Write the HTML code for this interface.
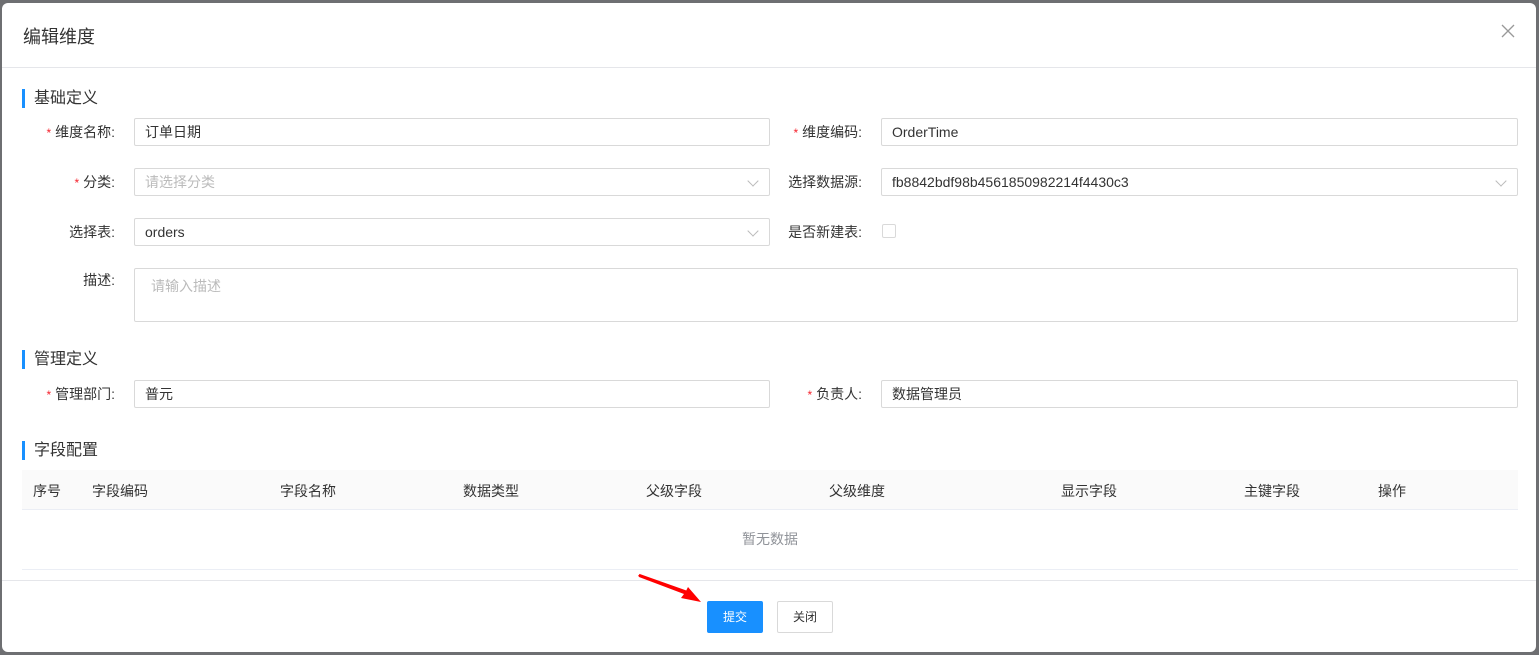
<!DOCTYPE html>
<html><head><meta charset="utf-8"><style>
*{box-sizing:border-box;margin:0;padding:0}
body{width:1539px;height:655px;background:#6e6f72;font-family:"Liberation Sans","Noto Sans CJK SC",sans-serif;position:relative;overflow:hidden;color:#333;font-size:14px}
.dlg{position:absolute;left:2px;top:3px;width:1534px;height:649px;background:#fff;border-radius:6px}
.a{position:absolute}
.title{left:21px;top:20px;font-size:18px;color:#333}
.hl{left:0;width:1534px;height:1px;background:#e5e6ea}
.sec{font-size:16px;color:#333;padding-left:9px;border-left:3px solid #1890ff;line-height:19px;left:20px}
.lbl{text-align:right;font-size:14px;color:#333;line-height:28px}
.lbl b{color:#f5222d;font-weight:normal;margin-right:4px;font-size:12px}
.in{border:1px solid #d9d9d9;border-radius:2px;height:28px;line-height:26px;padding-left:10px;font-size:14px;color:#333;background:#fff}
.ph{color:#bbb}
.arr{position:absolute;right:12px;top:8px;width:8px;height:8px;border-right:1px solid #bbb;border-bottom:1px solid #bbb;transform:rotate(45deg)}
.th{top:467px;left:20px;width:1496px;height:40px;background:#fafafa;border-bottom:1px solid #ebeef5}
.th span{position:absolute;top:11px;font-size:14px;color:#333}
.btn{height:32px;line-height:30px;text-align:center;font-size:12px;border-radius:2px}
</style></head><body>
<div class="dlg">
<div class="a title">编辑维度</div>
<div class="a" style="left:1498px;top:20px;width:16px;height:16px">
<svg width="16" height="16"><path d="M2 2L14 14M14 2L2 14" stroke="#999" stroke-width="1.3"/></svg></div>
<div class="a hl" style="top:64px"></div>

<div class="a sec" style="top:86px">基础定义</div>
<div class="a lbl" style="left:0;width:113px;top:115px"><b>*</b>维度名称:</div>
<div class="a in" style="left:132px;top:115px;width:636px">订单日期</div>
<div class="a lbl" style="left:760px;width:100px;top:115px"><b>*</b>维度编码:</div>
<div class="a in" style="left:879px;top:115px;width:637px">OrderTime</div>

<div class="a lbl" style="left:0;width:113px;top:165px"><b>*</b>分类:</div>
<div class="a in ph" style="left:132px;top:165px;width:636px">请选择分类<i class="arr"></i></div>
<div class="a lbl" style="left:760px;width:100px;top:165px">选择数据源:</div>
<div class="a in" style="left:879px;top:165px;width:637px">fb8842bdf98b4561850982214f4430c3<i class="arr"></i></div>

<div class="a lbl" style="left:0;width:113px;top:215px">选择表:</div>
<div class="a in" style="left:132px;top:215px;width:636px">orders<i class="arr"></i></div>
<div class="a lbl" style="left:760px;width:100px;top:215px">是否新建表:</div>
<div class="a" style="left:880px;top:221px;width:14px;height:14px;border:1px solid #d9d9d9;border-radius:2px"></div>

<div class="a lbl" style="left:0;width:113px;top:267px;line-height:20px">描述:</div>
<div class="a in ph" style="left:132px;top:265px;width:1384px;height:54px;padding-left:16px;line-height:34px">请输入描述</div>

<div class="a sec" style="top:347px">管理定义</div>
<div class="a lbl" style="left:0;width:113px;top:377px"><b>*</b>管理部门:</div>
<div class="a in" style="left:132px;top:377px;width:636px">普元</div>
<div class="a lbl" style="left:760px;width:100px;top:377px"><b>*</b>负责人:</div>
<div class="a in" style="left:879px;top:377px;width:637px">数据管理员</div>

<div class="a sec" style="top:438px">字段配置</div>
<div class="a th">
<span style="left:11px">序号</span><span style="left:70px">字段编码</span><span style="left:258px">字段名称</span><span style="left:441px">数据类型</span><span style="left:624px">父级字段</span><span style="left:807px">父级维度</span><span style="left:1039px">显示字段</span><span style="left:1222px">主键字段</span><span style="left:1356px">操作</span>
</div>
<div class="a" style="left:740px;top:526px;color:#909399;font-size:14px">暂无数据</div>
<div class="a" style="left:20px;top:566px;width:1496px;height:1px;background:#ebeef5"></div>
<div class="a hl" style="top:577px"></div>

<div class="a btn" style="left:705px;top:598px;width:56px;background:#1890ff;color:#fff;border:1px solid #1890ff">提交</div>
<div class="a btn" style="left:775px;top:598px;width:56px;border:1px solid #d9d9d9;color:#333">关闭</div>
</div>
<svg class="a" style="left:0;top:0" width="1539" height="655"><path d="M638 575L639 577L684 594L681 598L701 602L688 587L686 591Z" fill="#f00"/><path d="M639 575L687 592" stroke="#f00" stroke-width="2.5"/></svg>
</body></html>
